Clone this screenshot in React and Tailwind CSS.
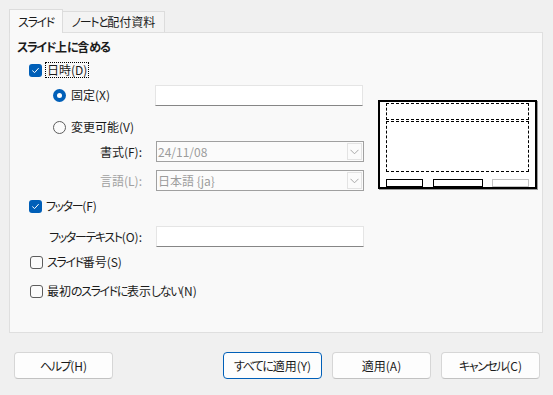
import React from 'react';

const font = { fontFamily: '"Noto Sans CJK JP", sans-serif' };

// kana runs are narrower in the original UI font, tighten them a bit
const J = ({ children }) =>
  String(children)
    .split(/([\u3040-\u30ff]+)/)
    .map((part, i) =>
      /[\u3040-\u30ff]/.test(part) ? (
        <span key={i} className="tracking-[-1.4px]">{part}</span>
      ) : (
        <React.Fragment key={i}>{part}</React.Fragment>
      )
    );

const Check = ({ checked }) =>
  checked ? (
    <span className="flex h-[13px] w-[13px] shrink-0 items-center justify-center rounded-[3px] bg-[#005fb8]">
      <svg width="9" height="9" viewBox="0 0 9 9" fill="none">
        <path d="M1.6 4.8 L3.6 6.6 L7.4 2.4" stroke="white" strokeWidth="1" strokeLinecap="round" strokeLinejoin="round" />
      </svg>
    </span>
  ) : (
    <span className="h-[13px] w-[13px] shrink-0 rounded-[3px] border border-[#5d5d5d] bg-[#fbfbfb]" />
  );

const Radio = ({ checked }) =>
  checked ? (
    <span className="flex h-[13px] w-[13px] shrink-0 items-center justify-center rounded-full bg-[#005fb8]">
      <span className="h-[5px] w-[5px] rounded-full bg-white" />
    </span>
  ) : (
    <span className="h-[13px] w-[13px] shrink-0 rounded-full border border-[#5d5d5d] bg-[#fbfbfb]" />
  );

const TextBox = () => (
  <div className="h-[21px] w-[208px] border border-[#e5e5e5] border-b-[#868686] bg-white" />
);

const SelectBox = ({ value }) => (
  <div className="flex h-[21px] w-[208px] items-stretch border border-[#a0a0a0] bg-[#fbfbfb]">
    <span className="flex-1 pl-[1px] leading-[19px] text-[#9c9c9c]">{value}</span>
    <span className="m-[1px] flex w-[15px] items-center justify-center border border-[#e3e3e3]">
      <svg width="9" height="6" viewBox="0 0 9 6" fill="none">
        <path d="M0.5 0.8 L4.5 4.8 L8.5 0.8" stroke="#a8a8a8" strokeWidth="1" />
      </svg>
    </span>
  </div>
);

const Button = ({ children, primary, className = '' }) => (
  <button
    className={`h-[27px] w-[99px] rounded-[4px] border bg-[#fdfdfd] text-[12px] text-[#1b1b1b] ${primary ? 'border-[#005fb8]' : 'border-[#d6d6d6] border-b-[#c2c2c2]'} ${className}`}
  >
    <J>{children}</J>
  </button>
);

export default function App() {
  return (
    <div
      className="flex h-[395px] w-[553px] flex-col bg-[#f0f0f0] text-[12px] text-[#1b1b1b] [font-feature-settings:'palt']"
      style={font}
    >
      {/* tabs */}
      <div className="flex items-end pl-[9px] pt-[9px]">
        <div className="relative z-10 -mb-px flex h-[24px] w-[54px] items-center justify-center border border-b-0 border-[#dcdcdc] bg-[#f9f9f9]">
          <J>スライド</J>
        </div>
        <div className="flex h-[21px] w-[102px] items-center justify-center border border-b-0 border-l-0 border-[#dcdcdc] bg-[#f3f3f3]">
          <J>ノートと配付資料</J>
        </div>
      </div>

      {/* panel */}
      <div className="ml-[9px] flex h-[301px] w-[534px] border border-[#dfdfdf] bg-[#f9f9f9]">
        <div className="flex w-[354px] flex-col pt-[6px]">
          <div className="flex h-[16px] items-center pl-[7px] font-bold"><J>スライド上に含める</J></div>

          <div className="mt-[5px] flex h-[20px] items-center gap-[3px] pl-[19px]">
            <Check checked />
            <span className="border border-dotted border-black px-[1px] leading-[14px]">日時(D)</span>
          </div>

          <div className="mt-[5px] flex h-[20px] items-center pl-[43px]">
            <Radio checked />
            <span className="ml-[5px] w-[84px]">固定(X)</span>
            <TextBox />
          </div>

          <div className="mt-[12px] flex h-[20px] items-center pl-[43px]">
            <Radio />
            <span className="ml-[5px]">変更可能(V)</span>
          </div>

          <div className="mt-[4px] flex h-[21px] items-center">
            <span className="w-[133px] pr-[1px] text-right">書式(F):</span>
            <span className="w-[13px]" />
            <SelectBox value="24/11/08" />
          </div>

          <div className="mt-[8px] flex h-[21px] items-center">
            <span className="w-[133px] pr-[1px] text-right text-[#a0a0a0]">言語(L):</span>
            <span className="w-[13px]" />
            <SelectBox value="日本語 {ja}" />
          </div>

          <div className="mt-[5px] flex h-[20px] items-center gap-[4px] pl-[19px]">
            <Check checked />
            <span><J>フッター(F)</J></span>
          </div>

          <div className="mt-[10px] flex h-[21px] items-center">
            <span className="w-[133px] pr-[1px] text-right"><J>フッターテキスト(O):</J></span>
            <span className="w-[13px]" />
            <TextBox />
          </div>

          <div className="mt-[5px] flex h-[20px] items-center gap-[4px] pl-[20px]">
            <Check />
            <span><J>スライド番号(S)</J></span>
          </div>

          <div className="mt-[9px] flex h-[20px] items-center gap-[4px] pl-[20px]">
            <Check />
            <span><J>最初のスライドに表示しない(N)</J></span>
          </div>
        </div>

        {/* preview */}
        <div className="ml-[14px] mt-[67px] flex h-[89px] w-[159px] flex-col border-2 border-black bg-white px-[6px] pt-[1px] shadow-[1px_1px_0_#9a9a9a]">
          <div className="h-[17px] border border-dashed border-black" />
          <div className="mt-[1px] h-[52px] border border-dashed border-black" />
          <div className="mt-[7px] flex h-[8px] justify-between">
            <div className="w-[37px] border border-black" />
            <div className="w-[50px] border border-black" />
            <div className="w-[37px] border border-[#c4c4c4]" />
          </div>
        </div>
      </div>

      {/* buttons */}
      <div className="mt-[19px] flex items-center pl-[14px]">
        <Button>ヘルプ(H)</Button>
        <Button primary className="ml-[110px]">すべてに適用(Y)</Button>
        <Button className="ml-[10px]">適用(A)</Button>
        <Button className="ml-[10px]">キャンセル(C)</Button>
      </div>
    </div>
  );
}
